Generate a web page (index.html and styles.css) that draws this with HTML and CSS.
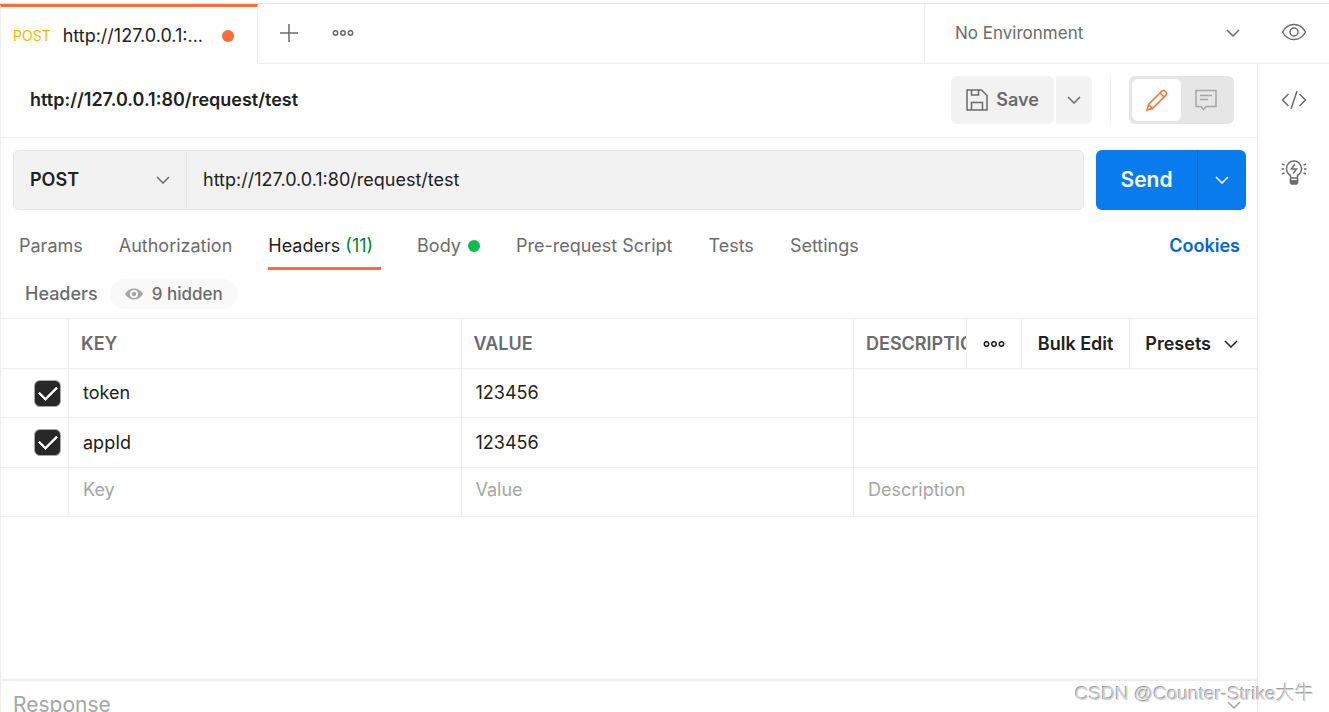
FILE: index.html
```html
<!DOCTYPE html>
<html lang="en">

<head>
    <meta charset="UTF-8">
    <meta name="viewport" content="width=device-width, initial-scale=1.0">
    <title>http://127.0.0.1:80/request/test</title>
    <link rel="stylesheet" href="styles.css">
</head>

<body>
    <!-- shared icons -->
    <svg class="sprite" aria-hidden="true">
        <symbol id="chevron" viewBox="0 0 14 8">
            <path d="M1 1l6 6 6-6" />
        </symbol>
        <symbol id="dots" viewBox="0 0 22 8">
            <circle cx="3.500" cy="4" r="2.200" />
            <circle cx="11" cy="4" r="2.200" />
            <circle cx="18.500" cy="4" r="2.200" />
        </symbol>
    </svg>

    <header class="tab-bar">
        <button class="tab">
            <span class="tab-method">POST</span>
            <span class="tab-name">http://127.0.0.1:...</span>
            <span class="dot unsaved"></span>
        </button>
        <div class="tab-tools">
            <button class="icon-btn" aria-label="New tab">
                <svg width="18" height="18" viewBox="0 0 18 18"><path d="M9 0v18M0 9h18" /></svg>
            </button>
            <button class="icon-btn" aria-label="Tab options">
                <svg width="22" height="8"><use href="#dots" /></svg>
            </button>
        </div>
        <button class="environment">
            No Environment
            <svg width="14" height="8"><use href="#chevron" /></svg>
        </button>
        <button class="icon-btn env-eye" aria-label="Environment quick look">
            <svg width="26" height="18" viewBox="0 0 26 18">
                <path d="M1.500 9C4 4.500 8 1.500 13 1.500S22 4.500 24.500 9C22 13.500 18 16.500 13 16.500S4 13.500 1.500 9z" />
                <circle cx="13" cy="9" r="4" />
            </svg>
        </button>
    </header>

    <div class="workspace">
        <main class="request">
            <div class="title-row">
                <h1>http://127.0.0.1:80/request/test</h1>
                <div class="save-group">
                    <button class="save">
                        <svg width="22" height="22" viewBox="0 0 22 22">
                            <path d="M1 1h14.500L21 6.500V21H1zM5.500 1v5h7V1M5.500 21v-7.500h11V21" />
                        </svg>
                        Save
                    </button>
                    <button class="save-more" aria-label="Save options">
                        <svg width="14" height="8"><use href="#chevron" /></svg>
                    </button>
                </div>
                <div class="view-switch">
                    <button class="active" aria-label="Edit">
                        <svg width="22" height="22" viewBox="0 0 22 22">
                            <path d="M1 21l1.500-5.500L16 2a1.900 1.900 0 0 1 2.700 0l1.300 1.300a1.900 1.900 0 0 1 0 2.700L6.500 19.500zM2.500 15.500l4 4M14 4l4 4" />
                        </svg>
                    </button>
                    <button aria-label="Comments">
                        <svg width="22" height="22" viewBox="0 0 22 22">
                            <path d="M1 1.500h20v16H11l-2.500 3-2.500-3H1zM5 6.500h12M5 10.500h8" />
                        </svg>
                    </button>
                </div>
            </div>

            <div class="url-row">
                <div class="url-box">
                    <button class="method">
                        POST
                        <svg width="14" height="8"><use href="#chevron" /></svg>
                    </button>
                    <input type="text" class="url" aria-label="Request URL" value="http://127.0.0.1:80/request/test">
                </div>
                <div class="send-group">
                    <button class="send">Send</button>
                    <button class="send-more" aria-label="Send options">
                        <svg width="14" height="8"><use href="#chevron" /></svg>
                    </button>
                </div>
            </div>

            <nav class="sections">
                <a href="#params">Params</a>
                <a href="#authorization">Authorization</a>
                <a href="#headers" class="current">Headers <span class="count">(11)</span></a>
                <a href="#body">Body <span class="dot filled"></span></a>
                <a href="#pre-request">Pre-request Script</a>
                <a href="#tests">Tests</a>
                <a href="#settings">Settings</a>
                <a href="#cookies" class="cookies">Cookies</a>
            </nav>

            <div class="sub-row" id="headers">
                <h2>Headers</h2>
                <button class="hidden-toggle">
                    <svg width="18" height="12" viewBox="0 0 18 12">
                        <path fill-rule="evenodd" d="M0 6C2 2.500 5 .5 9 .5S16 2.500 18 6C16 9.500 13 11.500 9 11.500S2 9.500 0 6zM9 2a4 4 0 1 0 0 8 4 4 0 0 0 0-8z" />
                        <circle cx="9" cy="6" r="2.200" />
                    </svg>
                    9 hidden
                </button>
            </div>

            <table class="headers-table">
                <thead>
                    <tr>
                        <th class="col-check"></th>
                        <th class="col-key">KEY</th>
                        <th class="col-value">VALUE</th>
                        <th class="col-desc">
                            <div class="desc-head">
                                <span class="desc-label">DESCRIPTION</span>
                                <button aria-label="Column options"><svg width="22" height="8"><use href="#dots" /></svg></button>
                                <button>Bulk Edit</button>
                                <button>Presets <svg width="14" height="8"><use href="#chevron" /></svg></button>
                            </div>
                        </th>
                    </tr>
                </thead>
                <tbody>
                    <tr>
                        <td class="check"><input type="checkbox" aria-label="Use token" checked></td>
                        <td>token</td>
                        <td>123456</td>
                        <td></td>
                    </tr>
                    <tr>
                        <td class="check"><input type="checkbox" aria-label="Use appId" checked></td>
                        <td>appId</td>
                        <td>123456</td>
                        <td></td>
                    </tr>
                    <tr class="new-row">
                        <td></td>
                        <td><input type="text" placeholder="Key" aria-label="Key"></td>
                        <td><input type="text" placeholder="Value" aria-label="Value"></td>
                        <td><input type="text" placeholder="Description" aria-label="Description"></td>
                    </tr>
                </tbody>
            </table>

            <section class="response">
                <h2>Response</h2>
                <svg width="14" height="8"><use href="#chevron" /></svg>
            </section>
        </main>

        <aside class="rail">
            <button class="icon-btn" aria-label="Code">
                <svg width="26" height="20" viewBox="0 0 26 20">
                    <path d="M7.500 4L1.500 10l6 6M18.500 4l6 6-6 6M16 1l-6 18" />
                </svg>
            </button>
            <button class="icon-btn" aria-label="Info">
                <svg width="26" height="26" viewBox="0 0 26 26">
                    <path d="M9.500 19v-2.500C7 15 5.500 12.500 5.500 9.500a7.500 7.500 0 0 1 15 0c0 3-1.500 5.500-4 7V19zM9.500 19v3h7v-3M13.800 5l-3.300 5h5l-3.300 4.500M1 5l2.500 1M.5 10H3M1 15l2.500-1M25 5l-2.500 1M25.500 10H23M25 15l-2.500-1" />
                    <path class="solid" d="M9.500 22h7v2l-1 1h-5l-1-1z" />
                </svg>
            </button>
        </aside>
    </div>

    <div class="watermark">CSDN @Counter-Strike大牛</div>
</body>

</html>
```

FILE: styles.css
```css
* {
    box-sizing: border-box;
}

body {
    margin: 0;
    height: 100vh;
    display: flex;
    flex-direction: column;
    overflow: hidden;
    padding-top: 3px;
    background-color: white;
    color: #212121;
    font-family: Inter, "Liberation Sans", sans-serif;
    font-size: 18px;
    line-height: 24px;
}

button,
input {
    font: inherit;
    color: inherit;
    border: none;
    background: none;
    padding: 0;
    margin: 0;
}

button {
    cursor: pointer;
}

h1,
h2 {
    margin: 0;
    font-size: 18px;
    font-weight: 600;
}

svg {
    flex: none;
    fill: none;
    stroke: currentColor;
    stroke-width: 1.5;
}

.solid {
    fill: currentColor;
}

.sprite {
    display: none;
}

.dot {
    display: inline-block;
    width: 12px;
    height: 12px;
    border-radius: 50%;
}

.icon-btn {
    display: flex;
    justify-content: center;
    align-items: center;
    color: #6b6b6b;
}

/* tab bar */
.tab-bar {
    display: flex;
    height: 61px;
    flex: none;
    border-top: 1px solid #e6e6e6;
}

.tab {
    display: flex;
    align-items: center;
    width: 258px;
    padding: 0 23px 0 12px;
    border-top: 3px solid #ff6c37;
    border-left: 1px solid #ededed;
    border-right: 1px solid #ededed;
}

.tab-method {
    color: #ffb400;
    font-size: 14px;
    margin-right: 12px;
}

.unsaved {
    background-color: #ff6c37;
    margin-left: auto;
}

.tab-tools {
    flex: 1;
    display: flex;
    gap: 34px;
    padding: 0 0 2px 22px;
    border-bottom: 1px solid #ededed;
}

.environment {
    display: flex;
    justify-content: space-between;
    align-items: center;
    width: 334px;
    padding: 0 18px 2px 30px;
    font-size: 17px;
    color: #6b6b6b;
    border-left: 1px solid #ededed;
    border-bottom: 1px solid #ededed;
}

.env-eye {
    width: 71px;
    padding-bottom: 3px;
    border-bottom: 1px solid #ededed;
}

.workspace {
    flex: 1;
    display: flex;
    min-height: 0;
}

.request {
    flex: 1;
    min-width: 0;
    display: flex;
    flex-direction: column;
    border-left: 1px solid #ededed;
    border-right: 1px solid #ededed;
}

.rail {
    width: 71px;
    padding-top: 24px;
    display: flex;
    flex-direction: column;
    align-items: center;
    gap: 48px;
}

.rail .icon-btn {
    height: 24px;
}

/* request title */
.title-row {
    display: flex;
    align-items: center;
    height: 74px;
    flex: none;
    padding: 0 23px 2px 29px;
    border-bottom: 1px solid #ededed;
}

.save-group {
    display: flex;
    gap: 2px;
    height: 48px;
    margin-left: auto;
    padding-right: 18px;
    border-right: 1px solid #ededed;
    color: #6b6b6b;
}

.save,
.save-more {
    display: flex;
    justify-content: center;
    align-items: center;
    gap: 8px;
    background-color: #f2f2f2;
}

.save {
    width: 103px;
    font-weight: 600;
    border-radius: 6px;
}

.save-more {
    width: 36px;
    border-radius: 0 6px 6px 0;
}

.view-switch {
    display: flex;
    height: 48px;
    margin-left: 18px;
    padding: 3px 4px 3px 3px;
    border-radius: 6px;
    background-color: #e6e6e6;
}

.view-switch button {
    display: flex;
    justify-content: center;
    align-items: center;
    width: 49px;
    color: #a6a6a6;
    border-radius: 6px;
}

.view-switch .active {
    background-color: white;
    color: #ff6c37;
}

/* url */
.url-row {
    display: flex;
    gap: 12px;
    height: 60px;
    flex: none;
    margin: 12px 11px 0 12px;
}

.url-box {
    flex: 1;
    display: flex;
    background-color: #f2f2f2;
    border: 1px solid #e6e6e6;
    border-radius: 6px;
}

.method {
    display: flex;
    justify-content: space-between;
    align-items: center;
    width: 173px;
    padding: 0 16px;
    font-weight: 600;
    border-right: 1px solid #e6e6e6;
}

.method svg,
.tab-bar svg {
    color: #6b6b6b;
}

.url {
    flex: 1;
    min-width: 0;
    padding: 0 16px;
}

.send-group {
    display: flex;
    border-radius: 6px;
    overflow: hidden;
    color: white;
    background-color: #097bed;
}

.send {
    width: 101px;
    font-size: 21px;
    font-weight: 600;
}

.send-more {
    display: flex;
    justify-content: center;
    align-items: center;
    width: 49px;
    border-left: 1px solid #076ed6;
}

/* section tabs */
.sections {
    display: flex;
    gap: 36px;
    height: 60px;
    flex: none;
    padding: 0 17px 0 18px;
}

.sections a {
    padding: 24px 0 9px;
    color: #6b6b6b;
    text-decoration: none;
    white-space: nowrap;
}

.sections .current {
    color: #212121;
    padding-right: 8px;
    border-bottom: 3px solid #ff6c37;
}

.count {
    color: #007f31;
}

.filled {
    background-color: #0cbb52;
    margin-left: 2px;
}

.sections .cookies {
    margin-left: auto;
    color: #0265d2;
    font-weight: 600;
}

.sub-row {
    display: flex;
    align-items: center;
    gap: 12px;
    height: 48px;
    flex: none;
    padding-left: 24px;
    color: #6b6b6b;
}

.sub-row h2 {
    font-weight: 500;
}

.hidden-toggle {
    display: flex;
    align-items: center;
    gap: 9px;
    height: 30px;
    padding: 0 15px;
    font-size: 17px;
    font-weight: 500;
    border-radius: 15px;
    background-color: #f9f9f9;
}

.hidden-toggle svg {
    fill: #a6a6a6;
    stroke: none;
}

/* headers table */
.headers-table {
    width: 100%;
    table-layout: fixed;
    border-collapse: separate;
    border-spacing: 0;
    border-top: 1px solid #ededed;
}

.headers-table th,
.headers-table td {
    height: 49px;
    padding: 0 14px;
    text-align: left;
    border-right: 1px solid #ededed;
    border-bottom: 1px solid #ededed;
}

.headers-table tr:nth-child(2) td {
    height: 50px;
}

.headers-table th {
    height: 50px;
    padding: 0 12px;
    color: #6b6b6b;
    font-weight: 600;
}

.headers-table th:last-child,
.headers-table td:last-child {
    border-right: none;
}

.headers-table .col-desc {
    width: 403px;
    padding-right: 0;
}

.col-check {
    width: 68px;
}

.desc-head {
    display: flex;
    height: 49px;
    align-items: center;
}

.desc-label {
    flex: 1;
    min-width: 0;
    overflow: hidden;
}

.desc-head button {
    display: flex;
    align-items: center;
    gap: 13px;
    height: 49px;
    padding: 0 19px 0 15px;
    color: #212121;
    font-weight: 600;
    border-left: 1px solid #ededed;
    white-space: nowrap;
}

.desc-head button:nth-of-type(-n+2) {
    padding: 0 16px;
}

.headers-table .check {
    padding: 0 7px 0 0;
    text-align: right;
}

.check input {
    appearance: none;
    display: inline-grid;
    place-items: center;
    width: 27px;
    height: 27px;
    border: 1px solid #a6a6a6;
    border-radius: 6px;
    background-color: #282828;
    vertical-align: middle;
}

.check input:checked::before {
    content: "";
    width: 17px;
    height: 9px;
    margin-bottom: 5px;
    border-left: 3px solid white;
    border-bottom: 3px solid white;
    border-radius: 1px;
    transform: rotate(-45deg) scale(0.9);
}

.new-row input {
    width: 100%;
    padding-bottom: 4px;
}

.new-row input::placeholder {
    color: #a6a6a6;
    opacity: 1;
}

/* response */
.response {
    display: flex;
    justify-content: space-between;
    height: 33px;
    flex: none;
    margin-top: auto;
    padding: 12px 16px 0 12px;
    border-top: 2px solid #ededed;
    color: #a6a6a6;
    overflow: hidden;
}

.response h2 {
    font-size: 21px;
    font-weight: 400;
}

.response svg {
    margin-top: 8px;
}

.watermark {
    position: absolute;
    right: 15px;
    bottom: 6px;
    font-family: "Liberation Sans", "Noto Sans CJK SC", sans-serif;
    font-size: 19px;
    font-weight: 300;
    color: #d4d4d4;
    text-shadow: -1px -1px 0 #a0a0a0;
}
```
